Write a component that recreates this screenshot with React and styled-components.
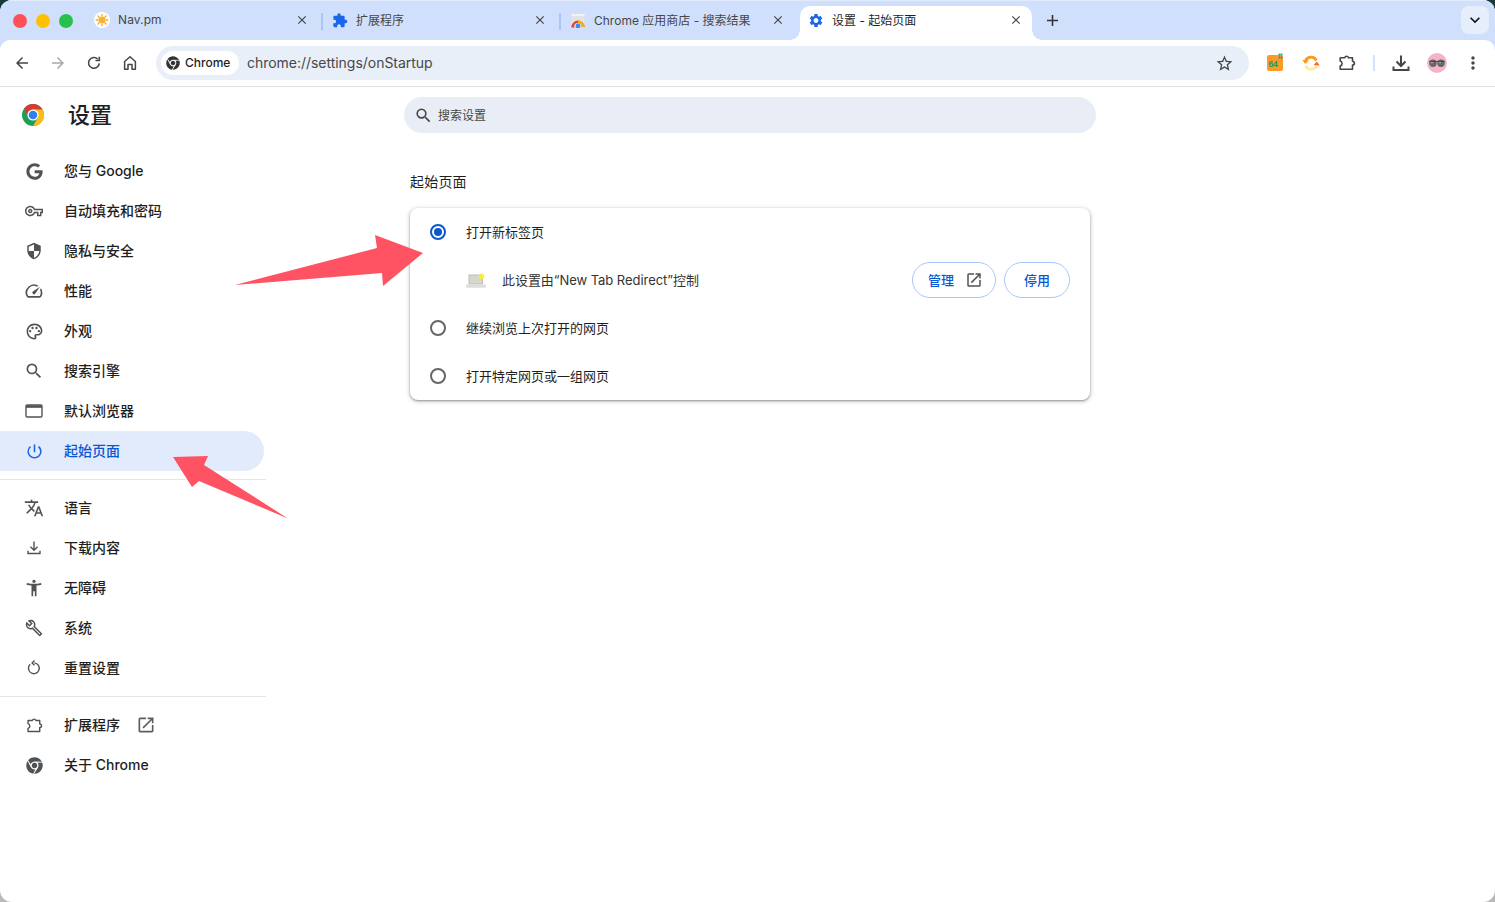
import React from "react";
import styled, { createGlobalStyle } from "styled-components";
import {
  MdOutlineVpnKey, MdSecurity, MdOutlineSpeed, MdOutlinePalette, MdSearch, MdPowerSettingsNew,
  MdTranslate, MdAccessibilityNew, MdOutlineBuild, MdOpenInNew, MdExtension,
  MdSettings, MdClose, MdAdd, MdKeyboardArrowDown, MdStarBorder, MdArrowBack, MdArrowForward, MdMoreVert,
} from "react-icons/md";
import { FaGoogle, FaChrome } from "react-icons/fa";

const FONT = `Inter, "Noto Sans CJK SC", "Noto Sans", sans-serif`;

const Global = createGlobalStyle`
  html, body { margin: 0; padding: 0; height: 100%; }
  body { font-family: ${FONT}; overflow: hidden; }
  * { box-sizing: border-box; }
`;

const Desk = styled.div`
  width: 1495px;
  height: 902px;
  background: linear-gradient(#17393a 0 50%, #b9b9b9 50% 100%);
`;
const Win = styled.div`
  position: relative;
  width: 100%;
  height: 100%;
  background: #fff;
  border-radius: 12px;
  overflow: hidden;
  display: flex;
  flex-direction: column;
`;
/* lifts the glyphs by a pixel inside a centred row: Noto's metrics sit lower than the reference font */
const Label = styled.span`
  display: block;
  margin-bottom: 2px;
  white-space: nowrap;
`;

/* tab strip */
const TabStrip = styled.div`
  height: 40px;
  flex: none;
  background: #d0e0fc;
  border-top: 1px solid #e2ebfb;
  display: flex;
  align-items: flex-end;
`;
const Lights = styled.div`
  width: 86px;
  flex: none;
  height: 39px;
  padding-left: 13px;
  display: flex;
  align-items: center;
  gap: 9px;
`;
const Light = styled.span`
  width: 14px;
  height: 14px;
  border-radius: 50%;
  background: ${(p) => p.$c};
`;
const Tab = styled.div`
  position: relative;
  width: 232px;
  height: 34px;
  flex: none;
  display: flex;
  align-items: center;
  padding: 0 9px 6px 8px;
  font-size: 12px;
  color: ${(p) => (p.$active ? "#1f1f1f" : "#474747")};
  background: ${(p) => (p.$active ? "#fff" : "transparent")};
  border-radius: 10px 10px 0 0;
  z-index: ${(p) => (p.$active ? 2 : 0)};
  ${(p) =>
    p.$active &&
    `
    &::before, &::after {
      content: "";
      position: absolute;
      bottom: 0;
      width: 10px;
      height: 10px;
    }
    &::before { left: -10px; background: radial-gradient(circle at 0 0, transparent 9.5px, #fff 10px); }
    &::after { right: -10px; background: radial-gradient(circle at 100% 0, transparent 9.5px, #fff 10px); }
  `}
`;
const Favicon = styled.span`
  width: 16px;
  height: 16px;
  flex: none;
  display: flex;
  align-items: center;
  justify-content: center;
  margin-right: 8px;
  color: #1a66e8;
`;
const TabTitle = styled(Label)`
  flex: 1;
  letter-spacing: ${(p) => (p.$latin ? "0.1px" : "0")};
`;
const TabClose = styled.span`
  display: flex;
  color: #444;
`;
const TabSep = styled.span`
  width: 2px;
  height: 17px;
  flex: none;
  margin: 0 1px 10px 3px;
  background: ${(p) => (p.$hidden ? "transparent" : "#a9c6f6")};
`;
const NewTab = styled.span`
  width: 28px;
  height: 28px;
  margin-left: 6px;
  margin-bottom: 6px;
  display: flex;
  align-items: center;
  justify-content: center;
  color: #333;
`;
const Grow = styled.div`
  flex: 1;
`;
const TabMenu = styled.span`
  width: 28px;
  height: 28px;
  margin: 0 6px 6px 0;
  border-radius: 8px;
  background: #e6eefc;
  display: flex;
  align-items: center;
  justify-content: center;
  color: #111;
`;

/* toolbar */
const Strip = styled.div`
  background: #d0e0fc;
  flex: none;
`;
const Toolbar = styled.div`
  position: relative;
  z-index: 1;
  height: 47px;
  background: #fff;
  border-bottom: 1px solid #dfdfdf;
  border-radius: 10px 10px 0 0;
  padding: 0 4px;
  display: flex;
  align-items: center;
`;
const ToolBtn = styled.span`
  width: 36px;
  height: 36px;
  flex: none;
  display: flex;
  align-items: center;
  justify-content: center;
  color: ${(p) => (p.$off ? "#a9a9a9" : "#444746")};
`;
const Omni = styled.div`
  flex: 1;
  height: 34px;
  margin: 0 8px;
  background: #e9eff9;
  border-radius: 17px;
  padding: 0 15px 0 5px;
  display: flex;
  align-items: center;
`;
const Chip = styled.div`
  width: 78px;
  height: 24px;
  flex: none;
  background: #fff;
  border-radius: 12px;
  padding-left: 5px;
  display: flex;
  align-items: center;
  gap: 5px;
  font-size: 12px;
  font-weight: 500;
  color: #1f1f1f;
`;
const Url = styled(Label)`
  flex: 1;
  margin-left: 8px;
  font-size: 14px;
  letter-spacing: -0.03px;
  color: #474747;
`;
const ToolSep = styled.span`
  width: 18px;
  height: 16px;
  flex: none;
  display: flex;
  justify-content: center;
  &::before {
    content: "";
    width: 2px;
    height: 16px;
    background: #d3e3fd;
  }
`;
const Ext64 = styled.span`
  position: relative;
  width: 16px;
  height: 16px;
  background: #fb9a26;
  border-radius: 2px;
  color: #06a57c;
  font: 700 9px/9px "Liberation Mono", monospace;
  letter-spacing: -1px;
  display: flex;
  align-items: flex-end;
  padding: 0 0 1px 1px;
`;
const Hash = styled.span`
  position: absolute;
  top: -2px;
  right: 0;
  font-size: 9px;
  line-height: 9px;
  letter-spacing: 0;
`;
const Avatar = styled.span`
  width: 20px;
  height: 20px;
  border-radius: 50%;
  background: #f6b3c6;
  display: flex;
  align-items: center;
  justify-content: center;
`;

/* main */
const Main = styled.div`
  flex: 1;
  display: flex;
  min-height: 0;
`;
const Sidebar = styled.nav`
  width: 266px;
  flex: none;
`;
const Head = styled.div`
  height: 64px;
  padding: 0 0 8px 21px;
  display: flex;
  align-items: center;
  gap: 23px;
`;
const HeadTitle = styled.h1`
  margin: 0 0 4px;
  font-size: 22px;
  font-weight: 500;
  color: #1f1f1f;
`;
const NavItem = styled.div`
  width: 264px;
  height: 40px;
  display: flex;
  align-items: center;
  border-radius: 0 20px 20px 0;
  padding-left: 24px;
  font-size: 14px;
  font-weight: 500;
  color: ${(p) => (p.$active ? "#0b57d0" : "#1f1f1f")};
  background: ${(p) => (p.$active ? "#e1ebfc" : "transparent")};
`;
const NavIcon = styled.span`
  width: 20px;
  height: 20px;
  flex: none;
  margin-right: 20px;
  display: flex;
  align-items: center;
  justify-content: center;
  color: ${(p) => (p.$active ? "#1a66e8" : "#505356")};
`;
const NavExtern = styled.span`
  display: flex;
  margin-left: 16px;
  color: #5b5e61;
`;
const Rule = styled.hr`
  margin: 8px 0;
  border: 0;
  height: 1px;
  background: #e5e5e5;
`;
const Content = styled.main`
  flex: 1;
  padding: 10px 0 0 138px;
`;
const SearchBar = styled.div`
  width: 692px;
  height: 36px;
  border-radius: 18px;
  background: #e9eef6;
  padding-left: 10px;
  display: flex;
  align-items: center;
  gap: 5px;
  font-size: 12px;
  color: #474747;
`;
const SectionTitle = styled.h2`
  margin: 0;
  padding: 39px 0 0 6px;
  height: 75px;
  font-size: 14px;
  line-height: 20px;
  font-weight: 400;
  letter-spacing: 0.2px;
  color: #1f1f1f;
`;
const Card = styled.section`
  width: 680px;
  margin-left: 6px;
  height: 192px;
  background: #fff;
  border-radius: 8px;
  box-shadow: 0 1px 2px rgba(60, 64, 67, 0.45), 0 1px 4px 1px rgba(60, 64, 67, 0.2);
`;
const Row = styled.div`
  height: 48px;
  display: flex;
  align-items: center;
  padding: 0 20px;
  gap: 20px;
  font-size: 13px;
  color: #1f1f1f;
`;
const Radio = styled.span`
  width: 16px;
  height: 16px;
  flex: none;
  border-radius: 50%;
  border: 2px solid ${(p) => (p.$on ? "#0b57d0" : "#666")};
  display: flex;
  align-items: center;
  justify-content: center;
  &::after {
    content: "";
    width: 8px;
    height: 8px;
    border-radius: 50%;
    background: ${(p) => (p.$on ? "#0b57d0" : "transparent")};
  }
`;
const PolicyRow = styled(Row)`
  padding-left: 56px;
  gap: 16px;
`;
const PolicyText = styled(Label)`
  flex: 1;
  font-size: 13px;
  letter-spacing: -0.05px;
  color: #333;
`;
const Buttons = styled.div`
  display: flex;
  gap: 8px;
`;
const PillBtn = styled.span`
  height: 36px;
  padding: ${(p) => (p.$icon ? "0 12px 0 15px" : "0 19px")};
  border: 1px solid #a8c7fa;
  border-radius: 18px;
  display: flex;
  align-items: center;
  gap: 11px;
  font-size: 13px;
  font-weight: 500;
  color: #0b57d0;
`;
const BtnIcon = styled.span`
  display: flex;
  color: #505356;
`;
const Arrows = styled.svg`
  position: absolute;
  left: 0;
  top: 0;
  pointer-events: none;
  z-index: 5;
`;

const Sun = () => (
  <svg width="16" height="16" viewBox="0 0 16 16">
    <circle cx="8" cy="8" r="8" fill="#fff" />
    <g stroke="#f3a723" strokeWidth="1.3" strokeLinecap="round">
      <path d="M8 2.200v1.600M8 12.200v1.600M2.200 8h1.600M12.200 8h1.600M3.900 3.900 5 5M11 11l1.100 1.100M3.900 12.100 5 11M11 5l1.100-1.100" />
    </g>
    <circle cx="8" cy="8" r="3.600" fill="#f9b233" />
  </svg>
);
const Store = () => (
  <svg width="16" height="16" viewBox="0 0 16 16">
    <path d="M1.500 2.500h13V15h-13z" fill="#e3e3e3" />
    <path d="M1.500 2h13v2h-13z" fill="#f3f3f3" />
    <path d="M1.500 15a6.500 6.500 0 0 1 13 0h-2.600a3.900 3.900 0 0 0-7.800 0z" fill="#db4437" />
    <path d="M8 8.500a6.500 6.500 0 0 1 6.500 6.500h-2.600A3.900 3.900 0 0 0 8 11.100z" fill="#f4b400" />
    <path d="M1.500 15h2.800v.6H1.500z" fill="#0f9d58" />
    <circle cx="8" cy="14" r="2.400" fill="#4285f4" />
  </svg>
);
const Logo = () => (
  <svg width="24" height="24" viewBox="0 0 24 24">
    <circle cx="12" cy="12" r="11" fill="#1e9e58" />
    <path d="M3.200 5.400A11 11 0 0 1 21.530 6.500H12L7.240 14.750z" fill="#d93b30" />
    <path d="M21.530 6.500A11 11 0 0 1 12 23l4.760-8.250L12 6.500z" fill="#f8bd1c" />
    <circle cx="12" cy="12" r="5.600" fill="#fff" />
    <circle cx="12" cy="12" r="4.300" fill="#2f7ff0" />
  </svg>
);
const SyncIcon = () => (
  <svg width="20" height="20" viewBox="0 0 20 20" fill="none">
    <path d="M4.300 8.500A6 6 0 0 1 15.400 7.500" stroke="#fb9a1c" strokeWidth="2.800" />
    <path d="M1.200 6.800 4.200 11 7.800 7.400z" fill="#fb9a1c" />
    <path d="M15.700 12A6 6 0 0 1 4.400 12.500" stroke="#ffeaa6" strokeWidth="2.800" />
    <path d="M18.800 12.500 15.800 8.400 12.600 12z" fill="#f76a2c" />
  </svg>
);
const Glasses = () => (
  <svg width="18" height="10" viewBox="0 0 18 10">
    <circle cx="5" cy="5.200" r="3.700" fill="#62676b" />
    <circle cx="13" cy="5.200" r="3.700" fill="#62676b" />
    <circle cx="4" cy="4.200" r="1.200" fill="#9aa0a4" />
    <circle cx="12" cy="4.200" r="1.200" fill="#9aa0a4" />
    <path d="M1 3.400h16" stroke="#333" strokeWidth=".8" />
  </svg>
);
const HomeGlyph = () => (
  <svg width="18" height="18" viewBox="0 0 18 18" fill="none" stroke="currentColor" strokeWidth="1.500" strokeLinejoin="round">
    <path d="M3.600 7.500 9 2.800l5.400 4.700V15.200h-3.400V10.400H7V15.200H3.600z" />
  </svg>
);
const PuzzleGlyph = ({ s = 20, w = 1.600 }) => (
  <svg width={s} height={s} viewBox="0 0 20 20" fill="none" stroke="currentColor" strokeWidth={w} strokeLinejoin="round">
    <path d="M3.200 4.700H7.700a2 2 0 0 1 3.800 0H15.500V8.300a1.900 1.900 0 0 1 0 3.800V16.300H3.200V13a2.600 2.600 0 0 0 0-5z" />
  </svg>
);
const DownloadGlyph = ({ s = 20 }) => (
  <svg width={s} height={s} viewBox="0 0 20 20" fill="none" stroke="currentColor" strokeWidth="2">
    <path d="M10 2.500v10M5.500 8.500 10 13l4.500-4.500" />
    <path d="M2.500 13.500v3.500h15v-3.500" />
  </svg>
);
const DownloadThin = () => (
  <svg width="18" height="18" viewBox="0 0 18 18" fill="none" stroke="currentColor" strokeWidth="1.400">
    <path d="M9 2.500v8.500M5.500 7.800 9 11.300l3.500-3.500" />
    <path d="M3 11.800v2.700h12v-2.700" />
  </svg>
);
const BrowserGlyph = () => (
  <svg width="18" height="16" viewBox="0 0 18 16" fill="none">
    <rect x="1" y="2" width="16" height="12" rx="1.200" stroke="currentColor" strokeWidth="1.400" />
    <path d="M1 3.600h16" stroke="currentColor" strokeWidth="2.400" />
  </svg>
);
const ResetGlyph = () => (
  <svg width="18" height="18" viewBox="0 0 18 18" fill="none" stroke="currentColor" strokeWidth="1.400">
    <path d="M9.500 3.900A5.400 5.400 0 1 1 5.200 5.300" />
    <path d="M9.500 1.600 7.100 3.900l2.400 2.300" />
  </svg>
);
const ReloadGlyph = () => (
  <svg width="18" height="18" viewBox="0 0 18 18" fill="none" stroke="currentColor" strokeWidth="1.600">
    <path d="M14.300 9.400A5.400 5.400 0 1 1 12.700 5" />
    <path d="M14.300 2.700v3.800h-3.800" />
  </svg>
);
const Laptop = () => (
  <svg width="20" height="15" viewBox="0 0 20 15">
    <path d="M2.500 1.500h14.500v10H2.500z" fill="#bdbdb8" />
    <path d="M3.500 2.500h12.500v8H3.500z" fill="#d7d6cf" />
    <path d="M0 11.500h20v2c0 .8-.6 1.300-1.400 1.300H1.400C.6 14.800 0 14.300 0 13.500z" fill="#dedede" />
    <circle cx="15.500" cy="3.200" r="2.800" fill="#f7ec3c" />
  </svg>
);

const groupA = [
  { label: "您与 Google", icon: <FaGoogle size={17} /> },
  { label: "自动填充和密码", icon: <MdOutlineVpnKey size={18} /> },
  { label: "隐私与安全", icon: <MdSecurity size={18} /> },
  { label: "性能", icon: <MdOutlineSpeed size={20} /> },
  { label: "外观", icon: <MdOutlinePalette size={19} /> },
  { label: "搜索引擎", icon: <MdSearch size={20} /> },
  { label: "默认浏览器", icon: <BrowserGlyph /> },
  { label: "起始页面", icon: <MdPowerSettingsNew size={19} />, active: true },
];
const groupB = [
  { label: "语言", icon: <MdTranslate size={20} /> },
  { label: "下载内容", icon: <DownloadThin /> },
  { label: "无障碍", icon: <MdAccessibilityNew size={20} /> },
  { label: "系统", icon: <MdOutlineBuild size={18} /> },
  { label: "重置设置", icon: <ResetGlyph /> },
];
const groupC = [
  { label: "扩展程序", icon: <PuzzleGlyph s={19} w={1.500} />, extern: true },
  { label: "关于 Chrome", icon: <FaChrome size={17} /> },
];

const NavGroup = ({ items }) =>
  items.map((it) => (
    <NavItem key={it.label} $active={it.active}>
      <NavIcon $active={it.active}>{it.icon}</NavIcon>
      <Label>{it.label}</Label>
      {it.extern && (
        <NavExtern>
          <MdOpenInNew size={20} />
        </NavExtern>
      )}
    </NavItem>
  ));

const tabs = [
  { title: "Nav.pm", icon: <Sun />, latin: true },
  { title: "扩展程序", icon: <MdExtension size={17} /> },
  { title: "Chrome 应用商店 - 搜索结果", icon: <Store /> },
  { title: "设置 - 起始页面", icon: <MdSettings size={17} />, active: true },
];

export default function App() {
  return (
    <Desk>
      <Global />
      <Win>
        <TabStrip>
          <Lights>
            <Light $c="#ff4f57" />
            <Light $c="#ffc000" />
            <Light $c="#28c04f" />
          </Lights>
          {tabs.map((t, i) => (
            <React.Fragment key={t.title}>
              <Tab $active={t.active}>
                <Favicon>{t.icon}</Favicon>
                <TabTitle $latin={t.latin}>{t.title}</TabTitle>
                <TabClose>
                  <MdClose size={14} />
                </TabClose>
              </Tab>
              {i < 3 && <TabSep $hidden={i === 2} />}
            </React.Fragment>
          ))}
          <NewTab>
            <MdAdd size={19} />
          </NewTab>
          <Grow />
          <TabMenu>
            <MdKeyboardArrowDown size={20} />
          </TabMenu>
        </TabStrip>
        <Strip>
          <Toolbar>
            <ToolBtn><MdArrowBack size={18} /></ToolBtn>
            <ToolBtn $off><MdArrowForward size={18} /></ToolBtn>
            <ToolBtn><ReloadGlyph /></ToolBtn>
            <ToolBtn><HomeGlyph /></ToolBtn>
            <Omni>
              <Chip>
                <FaChrome size={14} color="#333" />
                <Label>Chrome</Label>
              </Chip>
              <Url>chrome://settings/onStartup</Url>
              <MdStarBorder size={19} color="#444746" />
            </Omni>
            <ToolBtn>
              <Ext64>64<Hash>#</Hash></Ext64>
            </ToolBtn>
            <ToolBtn><SyncIcon /></ToolBtn>
            <ToolBtn><PuzzleGlyph /></ToolBtn>
            <ToolSep />
            <ToolBtn><DownloadGlyph /></ToolBtn>
            <ToolBtn><Avatar><Glasses /></Avatar></ToolBtn>
            <ToolBtn><MdMoreVert size={20} /></ToolBtn>
          </Toolbar>
        </Strip>
        <Main>
          <Sidebar>
            <Head>
              <Logo />
              <HeadTitle>设置</HeadTitle>
            </Head>
            <NavGroup items={groupA} />
            <Rule />
            <NavGroup items={groupB} />
            <Rule />
            <NavGroup items={groupC} />
          </Sidebar>
          <Content>
            <SearchBar>
              <MdSearch size={19} color="#444746" />
              <Label>搜索设置</Label>
            </SearchBar>
            <SectionTitle>起始页面</SectionTitle>
            <Card>
              <Row><Radio $on /><Label>打开新标签页</Label></Row>
              <PolicyRow>
                <Laptop />
                <PolicyText>此设置由“New Tab Redirect”控制</PolicyText>
                <Buttons>
                  <PillBtn $icon>
                    <Label>管理</Label>
                    <BtnIcon><MdOpenInNew size={18} /></BtnIcon>
                  </PillBtn>
                  <PillBtn><Label>停用</Label></PillBtn>
                </Buttons>
              </PolicyRow>
              <Row><Radio /><Label>继续浏览上次打开的网页</Label></Row>
              <Row><Radio /><Label>打开特定网页或一组网页</Label></Row>
            </Card>
          </Content>
        </Main>
        <Arrows width="1495" height="902" viewBox="0 0 1495 902">
          <path d="M235 285 377 248 375 235 423 253 383 286 382 273z" fill="#ff5263" />
          <path d="M173 457 208 456 204 465 288 518.500 199 481 192 487z" fill="#ff5263" />
        </Arrows>
      </Win>
    </Desk>
  );
}
